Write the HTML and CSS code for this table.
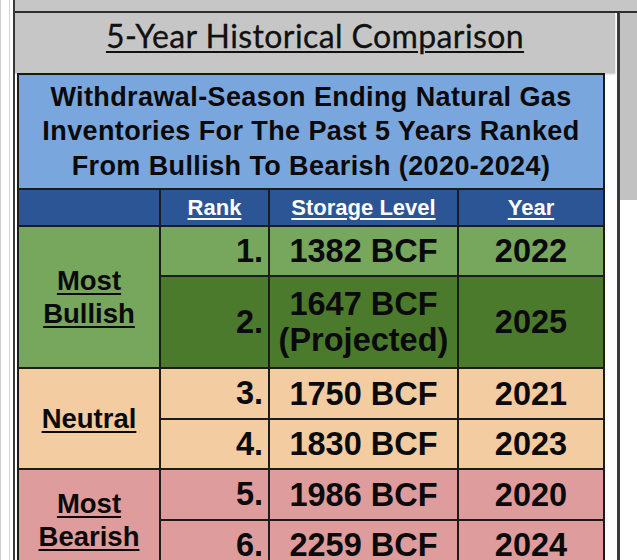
FILE: index.html
```html
<!DOCTYPE html>
<html>
<head>
<meta charset="utf-8">
<link rel="stylesheet" href="styles.css">
</head>
<body>
<div class="page">
  <div class="side"></div>
  <div class="sheet">
    <div class="topband"></div>
    <div class="body">
      <div class="main">
        <div class="heading"><span>5-Year Historical Comparison</span></div>
        <div class="tablewrap">
          <table class="cmp">
            <colgroup>
              <col class="c1"><col class="c2"><col class="c3"><col class="c4">
            </colgroup>
            <tr class="title-row">
              <th colspan="4">Withdrawal-Season Ending Natural Gas<br>Inventories For The Past 5 Years Ranked<br>From Bullish To Bearish (2020-2024)</th>
            </tr>
            <tr class="head-row">
              <th></th>
              <th><u>Rank</u></th>
              <th><u>Storage Level</u></th>
              <th><u>Year</u></th>
            </tr>
            <tr class="r1 bull">
              <td class="group" rowspan="2"><u>Most<br>Bullish</u></td>
              <td class="rank">1.</td>
              <td class="val">1382 BCF</td>
              <td class="val">2022</td>
            </tr>
            <tr class="r2 proj">
              <td class="rank">2.</td>
              <td class="val">1647 BCF<br>(Projected)</td>
              <td class="val">2025</td>
            </tr>
            <tr class="r3 neutral">
              <td class="group" rowspan="2"><u>Neutral</u></td>
              <td class="rank">3.</td>
              <td class="val">1750 BCF</td>
              <td class="val">2021</td>
            </tr>
            <tr class="r4 neutral">
              <td class="rank">4.</td>
              <td class="val">1830 BCF</td>
              <td class="val">2023</td>
            </tr>
            <tr class="r5 bear">
              <td class="group" rowspan="2"><u>Most<br>Bearish</u></td>
              <td class="rank">5.</td>
              <td class="val">1986 BCF</td>
              <td class="val">2020</td>
            </tr>
            <tr class="r6 bear">
              <td class="rank">6.</td>
              <td class="val">2259 BCF</td>
              <td class="val">2024</td>
            </tr>
          </table>
        </div>
      </div>
      <div class="vline"></div>
      <div class="right"><div class="rightgray"></div></div>
    </div>
  </div>
</div>
</body>
</html>
```

FILE: styles.css
```css
html, body {
  margin: 0;
  padding: 0;
  background: #ffffff;
  overflow: hidden;
}
.page {
  display: flex;
  width: 637px;
  height: 560px;
}
.side {
  width: 9px;
  flex: none;
  border-right: 1px solid #d4d4d4;
  margin-right: 3px;
  background: #ffffff;
  box-shadow: inset 1px 0 0 #cfcfcf;
}
.sheet {
  flex: 1;
  border-left: 2px solid #3a3a3a;
  display: flex;
  flex-direction: column;
}
.topband {
  height: 11px;
  background: #c6c6c6;
  border-bottom: 2px solid #2e2e2e;
  flex: none;
}
.body {
  flex: 1;
  display: flex;
}
.main {
  width: 602px;
  flex: none;
  display: flex;
  flex-direction: column;
}
.heading {
  height: 60px;
  background: #c6c6c6;
  display: flex;
  align-items: flex-start;
  justify-content: center;
  box-shadow: 0 1px 2px rgba(0,0,0,0.25);
  position: relative;
  z-index: 1;
  margin-right: 2px;
}
.heading span {
  font-family: "Lato", "Open Sans", sans-serif;
  font-size: 32px;
  line-height: 36px;
  letter-spacing: 0.4px;
  color: #111;
  text-decoration: underline;
  text-decoration-thickness: 2px;
  text-underline-offset: 3px;
  margin-top: 5px;
  -webkit-text-stroke: 0.3px #111;
}
.tablewrap {
  padding-left: 2px;
}
.vline {
  width: 3px;
  background: #3a3a3a;
  flex: none;
}
.right {
  flex: 1;
}
.rightgray {
  height: 187px;
  background: #c2c2c2;
}
table.cmp {
  border-collapse: collapse;
  table-layout: fixed;
  width: 586px;
  font-family: "Liberation Sans", Arial, sans-serif;
  font-weight: bold;
  color: #0a0a0a;
}
col.c1 { width: 142px; }
col.c2 { width: 109px; }
col.c3 { width: 189px; }
col.c4 { width: 146px; }
table.cmp td, table.cmp th {
  border: 2px solid #1c1c1c;
  padding: 0;
  text-align: center;
  vertical-align: middle;
}
.title-row th {
  background: #79a6dc;
  height: 113px;
  font-size: 27px;
  line-height: 34.5px;
  letter-spacing: 0.4px;
  border-top: none;
  padding-top: 2px;
}
.head-row th {
  background: #2b5595;
  color: #ffffff;
  height: 35px;
  font-size: 22px;
}
.head-row u {
  text-decoration-thickness: 2px;
  text-underline-offset: 3px;
}
.group {
  font-size: 27.5px;
  line-height: 33px;
}
.group u {
  text-decoration-thickness: 2px;
  text-underline-offset: 3px;
}
.rank {
  text-align: right !important;
  padding-right: 5px !important;
  font-size: 32.5px;
}
.val {
  font-size: 32.5px;
  line-height: 36px;
}
.r1 td { height: 48px; }
.r2 td { height: 90px; }
.r3 td { height: 49px; }
.r4 td { height: 48px; }
.r5 td { height: 49px; }
.r6 td { height: 48px; }
.bull td { background: #77a65d; }
.proj td { background: #4c7a2d; }
.neutral td { background: #f3cca2; }
.bear td { background: #df9c9c; }
```
